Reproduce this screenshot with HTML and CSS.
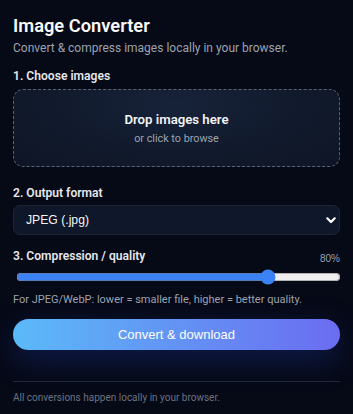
FILE: index.html
```html
<!DOCTYPE html>
<html lang="en">
<head>
  <meta charset="UTF-8" />
  <meta name="viewport" content="width=device-width, initial-scale=1.0"/>
  <title>Image Converter</title>
  <link rel="stylesheet" href="styles.css">
</head>
<body>

  <main class="app">
    <h1>Image Converter</h1>
    <p class="sub">Convert &amp; compress images locally in your browser.</p>

    <!-- Step 1 -->
    <label class="step">1. Choose images</label>
    <div class="drop">
      <strong>Drop images here</strong>
      <span>or click to browse</span>
    </div>

    <!-- Step 2 -->
    <label class="step step-2" for="format">2. Output format</label>
    <div class="select-wrap">
      <select id="format">
        <option value="jpeg">JPEG (.jpg)</option>
        <option value="png">PNG (.png)</option>
        <option value="webp">WebP (.webp)</option>
      </select>
      <svg class="chev" width="10" height="7" viewBox="0 0 10 7"><path d="M1.3 1.3 5 5l3.7-3.7" fill="none" stroke="#fff" stroke-width="2.2" stroke-linecap="round" stroke-linejoin="round"/></svg>
    </div>

    <!-- Step 3 -->
    <div class="row">
      <label class="step" for="quality">3. Compression / quality</label>
      <span class="val" id="qval">80%</span>
    </div>
    <input type="range" id="quality" min="5" max="100" value="80">
    <p class="hint">For JPEG/WebP: lower = smaller file, higher = better quality.</p>

    <button class="go">Convert &amp; download</button>

    <footer>All conversions happen locally in your browser.</footer>
  </main>

  <script>
    const q = document.getElementById('quality');
    q.addEventListener('input', () => {
      document.getElementById('qval').textContent = q.value + '%';
    });
  </script>
</body>
</html>
```
FILE: styles.css
```css
* { box-sizing: border-box; }
body {
  margin: 0;
  background: #060916;
  color: #e5e7eb;
  font-family: Roboto, sans-serif;
}
.app {
  padding: 12px 13px 10px;
}
h1 {
  margin: 0;
  font-size: 18.3px;
  font-weight: 600;
  color: #f9fafb;
  line-height: 27px;
}
.sub {
  margin: 1px 0 0;
  font-size: 12px;
  color: #9ca3af;
  line-height: 16px;
}
.step {
  display: block;
  font-size: 12.1px;
  font-weight: 600;
  color: #e5e7eb;
  line-height: 16px;
}
.sub + .step { margin-top: 12px; }
.drop {
  margin-top: 5px;
  height: 78px;
  border: 1px dashed #5b6474;
  border-radius: 10px;
  background: radial-gradient(ellipse at 50% 20%, #17233a 0%, #111a2c 55%, #0e1526 100%);
  display: flex;
  flex-direction: column;
  align-items: center;
  justify-content: center;
  gap: 3px;
}
.drop strong {
  font-size: 13.2px;
  font-weight: 600;
  color: #f3f4f6;
  line-height: 18px;
}
.drop span {
  font-size: 10.8px;
  color: #9ca3af;
  line-height: 14px;
}
.step-2 { margin-top: 18px; }
.select-wrap {
  position: relative;
  margin-top: 4px;
}
select {
  display: block;
  width: 100%;
  height: 30px;
  appearance: none;
  background: #0f172a;
  border: 1px solid #1c2536;
  border-radius: 7px;
  color: #f3f4f6;
  font-family: 'Liberation Sans', Arial, sans-serif;
  font-size: 12.2px;
  padding: 0 12px;
}
.chev {
  position: absolute;
  right: 4px;
  top: 12px;
  pointer-events: none;
}
.row {
  display: flex;
  justify-content: space-between;
  align-items: flex-end;
  margin-top: 13px;
}
.val {
  font-family: 'Liberation Sans', Arial, sans-serif;
  font-size: 10px;
  color: #94a3b8;
  line-height: 14px;
  margin-bottom: -2px;
}
input[type=range] {
  display: block;
  width: calc(100% - 2px);
  height: 16px;
  margin: 5px 0 0 3px;
  accent-color: #3b82f6;
}
.hint {
  margin: 8px 0 0;
  font-size: 11px;
  color: #9ca3af;
  line-height: 14px;
}
.go {
  display: block;
  width: 100%;
  height: 31px;
  margin-top: 12px;
  border: none;
  border-radius: 999px;
  background: linear-gradient(90deg, #5bbaf8, #6b6cf1);
  color: #fff;
  font-family: 'Liberation Sans', Arial, sans-serif;
  font-size: 13px;
  box-shadow: 0 10px 30px rgba(30, 58, 160, 0.4);
  cursor: pointer;
}
footer {
  margin-top: 31px;
  padding-top: 9px;
  border-top: 1px solid #1f2937;
  font-size: 10px;
  color: #6b7280;
  line-height: 14px;
}
```
